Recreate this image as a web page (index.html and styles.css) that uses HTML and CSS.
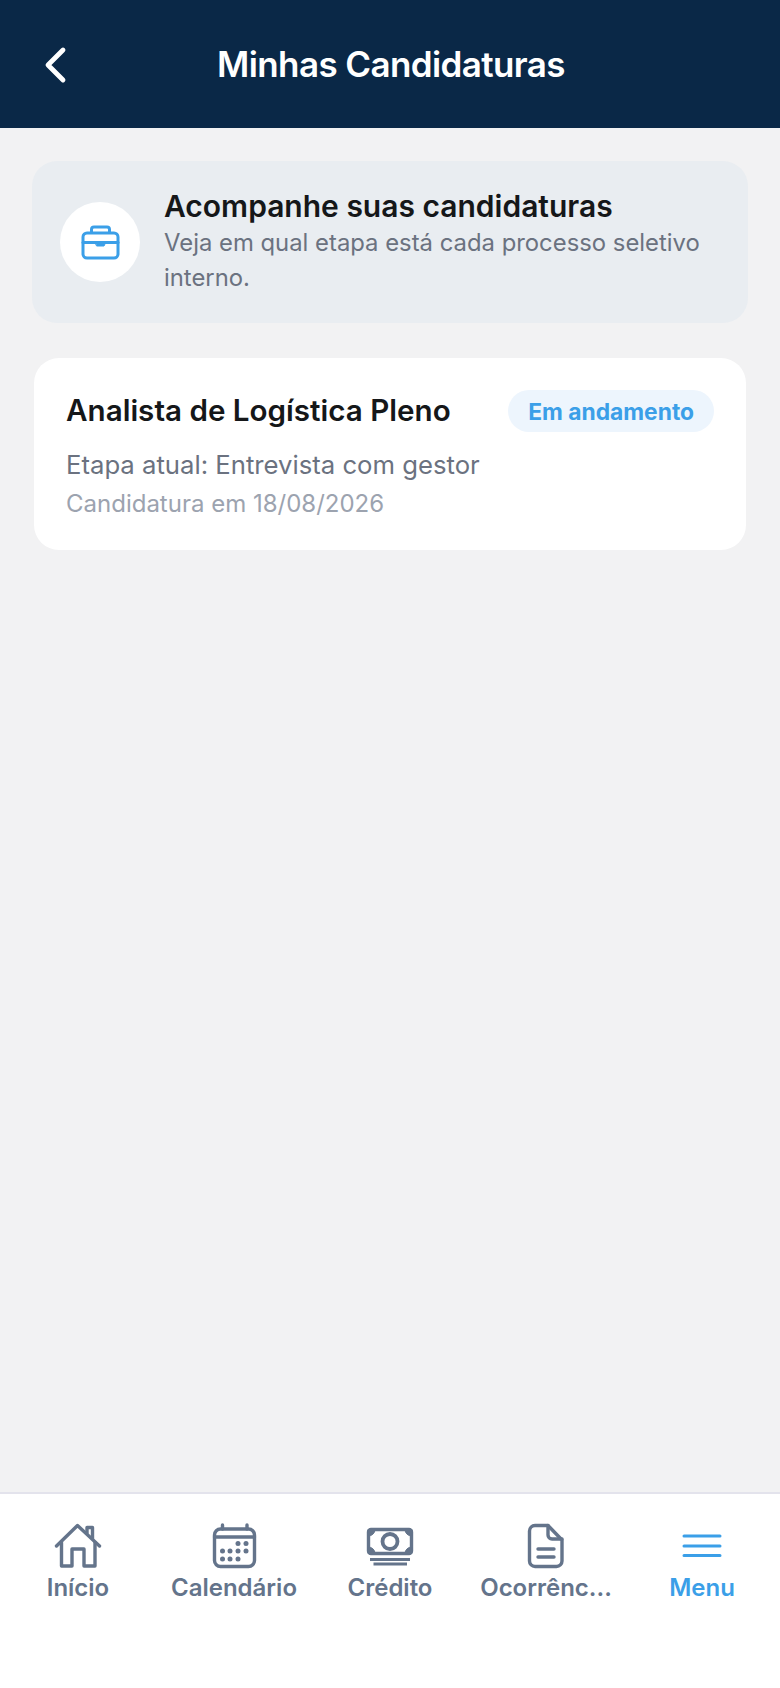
FILE: index.html
```html
<!DOCTYPE html>
<html lang="pt-BR">
<head>
<meta charset="utf-8">
<title>Minhas Candidaturas</title>
<link rel="stylesheet" href="styles.css">
</head>
<body>
<div class="page">
  <header class="header">
    <button class="back" aria-label="Voltar">
      <svg width="24" height="38" viewBox="0 0 24 38"><path d="M20 4 L5 19 L20 34" fill="none" stroke="#fff" stroke-width="4.8" stroke-linecap="round" stroke-linejoin="round"/></svg>
    </button>
    <h1 class="header-title">Minhas Candidaturas</h1>
  </header>
  <main class="content">
    <section class="hero">
      <div class="hero-icon">
        <svg width="40" height="40" viewBox="0 0 40 40" fill="none" stroke="#3b9fe8" stroke-width="3" stroke-linejoin="round" stroke-linecap="round">
          <rect x="3" y="11" width="35" height="25" rx="4"/>
          <path d="M11.500 10.500 V7.500 a2.500 2.500 0 0 1 2.500-2.500 h13 a2.500 2.500 0 0 1 2.500 2.500 V10.500"/>
          <path d="M3 20.500 H38"/>
          <path d="M15.500 21 H25.500 L24 24 H17 Z" fill="#3b9fe8" stroke-width="1"/>
        </svg>
      </div>
      <div class="hero-text">
        <h2 class="hero-title">Acompanhe suas candidaturas</h2>
        <p class="hero-desc">Veja em qual etapa está cada processo seletivo interno.</p>
      </div>
    </section>
    <article class="card">
      <div class="card-top">
        <h3 class="card-title">Analista de Logística Pleno</h3>
        <span class="badge">Em andamento</span>
      </div>
      <p class="card-stage">Etapa atual: Entrevista com gestor</p>
      <p class="card-date">Candidatura em 18/08/2026</p>
    </article>
  </main>
  <nav class="tabs">
    <a class="tab">
      <svg class="tab-icon" viewBox="0 0 48 48" fill="none" stroke="#64748b" stroke-width="3.4" stroke-linecap="round" stroke-linejoin="round">
        <path d="M2.500 25 L23.500 4.500 L45.500 25"/>
        <path d="M7.500 21.500 V45 H18 V28 H30 V45 H41 V21.500"/>
        <path d="M33 12 V6.500 H38.500 V17.500"/>
      </svg>
      <span class="tab-label">Início</span>
    </a>
    <a class="tab">
      <svg class="tab-icon" viewBox="0 0 48 48" fill="none" stroke="#64748b" stroke-width="3.4" stroke-linecap="round" stroke-linejoin="round">
        <rect x="4.500" y="8" width="40" height="37.500" rx="6"/>
        <path d="M4.500 16 H44.500"/>
        <path d="M12.500 4 V8 M37 4 V8"/>
        <g fill="#64748b" stroke="none">
          <circle cx="28" cy="22.500" r="2.500"/><circle cx="36" cy="22.500" r="2.500"/>
          <circle cx="12.500" cy="30" r="2.500"/><circle cx="20" cy="30" r="2.500"/><circle cx="28" cy="30" r="2.500"/><circle cx="36" cy="30" r="2.500"/>
          <circle cx="12.500" cy="38" r="2.500"/><circle cx="20" cy="38" r="2.500"/><circle cx="28" cy="38" r="2.500"/>
        </g>
      </svg>
      <span class="tab-label">Calendário</span>
    </a>
    <a class="tab">
      <svg class="tab-icon" viewBox="0 0 48 48" fill="none" stroke="#64748b" stroke-width="3.4" stroke-linecap="round" stroke-linejoin="round">
        <rect x="2.500" y="8.500" width="43" height="24" rx="2.500"/>
        <circle cx="24" cy="20.500" r="7.500" stroke-width="3.800"/>
        <path d="M2.500 8.500 H9 A6.500 6.500 0 0 1 2.500 15 Z M45.500 8.500 H39 A6.500 6.500 0 0 0 45.500 15 Z M2.500 32.500 H9 A6.500 6.500 0 0 0 2.500 26 Z M45.500 32.500 H39 A6.500 6.500 0 0 1 45.500 26 Z" fill="#64748b" stroke-width="1"/>
        <path d="M4 38.500 H44 M7.500 43 H41" stroke-linecap="butt" stroke-width="3.200"/>
      </svg>
      <span class="tab-label">Crédito</span>
    </a>
    <a class="tab">
      <svg class="tab-icon" viewBox="0 0 48 48" fill="none" stroke="#64748b" stroke-width="3.4" stroke-linecap="round" stroke-linejoin="round">
        <path d="M13 4.500 H26 L40 19 V40 a5.500 5.500 0 0 1-5.500 5.500 H13 a5.500 5.500 0 0 1-5.500-5.500 V10 a5.500 5.500 0 0 1 5.500-5.500 Z"/>
        <path d="M26 4.500 V14 a4 4 0 0 0 4 4 H40"/>
        <path d="M16 28 H32 M16 36 H32"/>
      </svg>
      <span class="tab-label">Ocorrênc...</span>
    </a>
    <a class="tab tab-active">
      <svg class="tab-icon" viewBox="0 0 48 48" fill="none" stroke="#3b9fe8" stroke-width="3" stroke-linecap="round">
        <path d="M6 15 H42 M6 25 H42 M6 34.500 H42"/>
      </svg>
      <span class="tab-label">Menu</span>
    </a>
  </nav>
</div>
</body>
</html>
```
FILE: styles.css
```css
* { box-sizing: border-box; }
html, body { margin: 0; padding: 0; }
body { font-family: Inter, "Liberation Sans", sans-serif; background: #f2f2f3; }
h1, h2, h3, p { margin: 0; }

.page { height: 1688px; display: flex; flex-direction: column; }

.header {
  height: 128px;
  background: #0a2847;
  display: flex;
  align-items: center;
  justify-content: center;
  padding-left: 2px;
  position: relative;
}
.back {
  position: absolute;
  left: 43px;
  top: 46px;
  padding: 0;
  border: 0;
  background: none;
  display: flex;
}
.header-title { color: #fff; font-size: 35px; font-weight: 600; line-height: 40px; letter-spacing: -0.6px; }

.content {
  flex: 1;
  padding: 34px 34px 0;
  display: flex;
  flex-direction: column;
  gap: 35px;
}
.hero {
  margin: -1px -2px 0;
  height: 162px;
  background: #e9edf1;
  border-radius: 25px;
  padding: 0 28px;
  display: flex;
  align-items: center;
  gap: 24px;
}
.hero-icon {
  width: 80px;
  height: 80px;
  border-radius: 50%;
  background: #fff;
  flex: none;
  display: flex;
  align-items: center;
  justify-content: center;
}
.hero-text { flex: 1; min-width: 0; }
.hero-title { font-size: 30px; font-weight: 600; line-height: 35px; color: #151719; }
.hero-desc { font-size: 23.850px; line-height: 34.500px; color: #6b7280; padding-top: 2px; }

.card {
  height: 192px;
  background: #fff;
  border-radius: 25px;
  padding: 31px 32px 0;
}
.card-top { display: flex; justify-content: space-between; align-items: flex-start; }
.card-title { font-size: 29.600px; font-weight: 600; line-height: 42px; color: #151719; }
.badge {
  height: 42px;
  margin-top: 1px;
  border-radius: 21px;
  padding: 0 20px;
  background: #edf5fd;
  color: #3b9fe8;
  font-size: 22.800px;
  font-weight: 700;
  line-height: 44px;
}
.card-stage { margin-top: 15px; font-size: 25.700px; line-height: 36px; color: #6b7280; }
.card-date { margin-top: 3px; font-size: 24px; line-height: 36px; color: #9ca3af; }

.tabs {
  height: 196px;
  flex: none;
  background: #fff;
  border-top: 2px solid #e3e3ec;
  display: flex;
  padding-top: 27px;
}
.tab {
  flex: 1 1 0;
  min-width: 0;
  display: flex;
  flex-direction: column;
  align-items: center;
  gap: 3px;
}
.tab-icon { width: 48px; height: 48px; display: block; }
.tab-label {
  white-space: nowrap;
  font-size: 24px;
  font-weight: 600;
  line-height: 32px;
  color: #64748b;
}
.tab-active .tab-label { color: #3b9fe8; }
```
